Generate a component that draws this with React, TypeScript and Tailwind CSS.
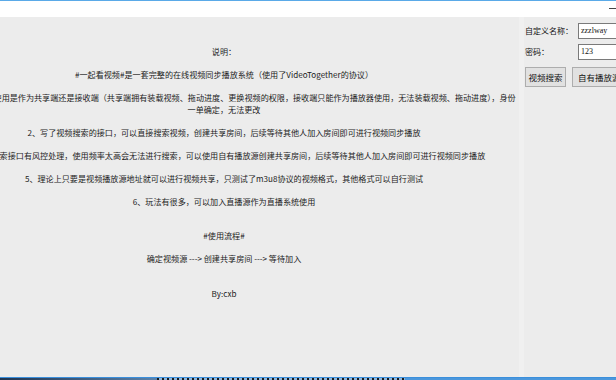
const lines: string[] = [
  "说明：",
  "",
  "#一起看视频#是一套完整的在线视频同步播放系统（使用了VideoTogether的协议）",
  "",
  "1、可以选择自己使用是作为共享端还是接收端（共享端拥有装载视频、拖动进度、更换视频的权限，接收端只能作为播放器使用，无法装载视频、拖动进度），身份",
  "一单确定，无法更改",
  "",
  "2、写了视频搜索的接口，可以直接搜索视频，创建共享房间，后续等待其他人加入房间即可进行视频同步播放",
  "",
  "3、视频搜索接口有风控处理，使用频率太高会无法进行搜索，可以使用自有播放源创建共享房间，后续等待其他人加入房间即可进行视频同步播放",
  "",
  "5、理论上只要是视频播放源地址就可以进行视频共享，只测试了m3u8协议的视频格式，其他格式可以自行测试",
  "",
  "6、玩法有很多，可以加入直播源作为直播系统使用",
  "",
  "",
  "#使用流程#",
  "",
  "确定视频源 ---> 创建共享房间 ---> 等待加入",
  "",
  "",
  "By:cxb",
];

function Field({ label, value }: { label: string; value: string }) {
  return (
    <div className="flex items-center">
      <span className="w-[53px] shrink-0 text-[8px] leading-none text-[#111]">{label}</span>
      <div className="flex h-[16px] w-[60px] shrink-0 items-center border border-[#7a7a7a] bg-white px-[2px] font-['Liberation_Serif',serif] text-[8px] leading-none text-[#111]">
        {value}
      </div>
    </div>
  );
}

export default function App() {
  return (
    <div className="flex h-[380px] w-[616px] flex-col overflow-hidden bg-white font-['Noto_Sans_CJK_SC',sans-serif] text-[#1c1c1c]">
      <div className="h-px shrink-0 bg-[#5aaae8]" />
      <div className="flex h-[16px] shrink-0 items-start justify-end bg-white">
        <div className="mt-[7px] h-px w-[7px] bg-[#444]" />
      </div>

      <div className="flex min-h-0 flex-1">
        {/* description area */}
        <div className="w-[519px] shrink-0 overflow-hidden bg-[#ececec] pt-[29px]">
          <div className="ml-[-70px] w-[588px] text-center text-[8.1px]">
            {lines.map((t, i) => (
              <div key={i} className="h-[11.5px] whitespace-nowrap leading-[11.5px]">
                {t}
              </div>
            ))}
          </div>
        </div>
        <div className="w-[5px] shrink-0 bg-[#f0f0f0]" />

        {/* settings panel */}
        <div className="flex flex-1 flex-col bg-[#ececec] pl-[1px] pt-[6px]">
          <div className="flex flex-col gap-[5px]">
            <Field label="自定义名称：" value="zzzlway" />
            <Field label="密码：" value="123" />
          </div>
          <div className="mt-[7px] flex gap-[6px]">
            <button className="flex h-[20px] w-[41px] shrink-0 items-center justify-center border border-[#adadad] bg-[#e1e1e1] text-[8.5px] leading-none text-[#111]">
              视频搜索
            </button>
            <button className="flex h-[20px] w-[80px] shrink-0 items-center justify-start whitespace-nowrap border border-[#adadad] bg-[#e1e1e1] pl-[5px] text-[8.5px] leading-none text-[#111]">
              自有播放源创建
            </button>
          </div>
        </div>
      </div>

      {/* taskbar edge */}
      <div className="h-px shrink-0 bg-[#3b8fdc]" />
      <div className="flex h-[2px] shrink-0">
        <div className="w-[157px] bg-[linear-gradient(90deg,#1f3450,#5b82ab)]" />
        <div className="w-[248px] bg-[repeating-linear-gradient(90deg,#1a1a1a_0px,#1a1a1a_2px,#8db6dc_2px,#8db6dc_5px)]" />
        <div className="flex-1 bg-[#4b97dc]" />
      </div>
    </div>
  );
}
